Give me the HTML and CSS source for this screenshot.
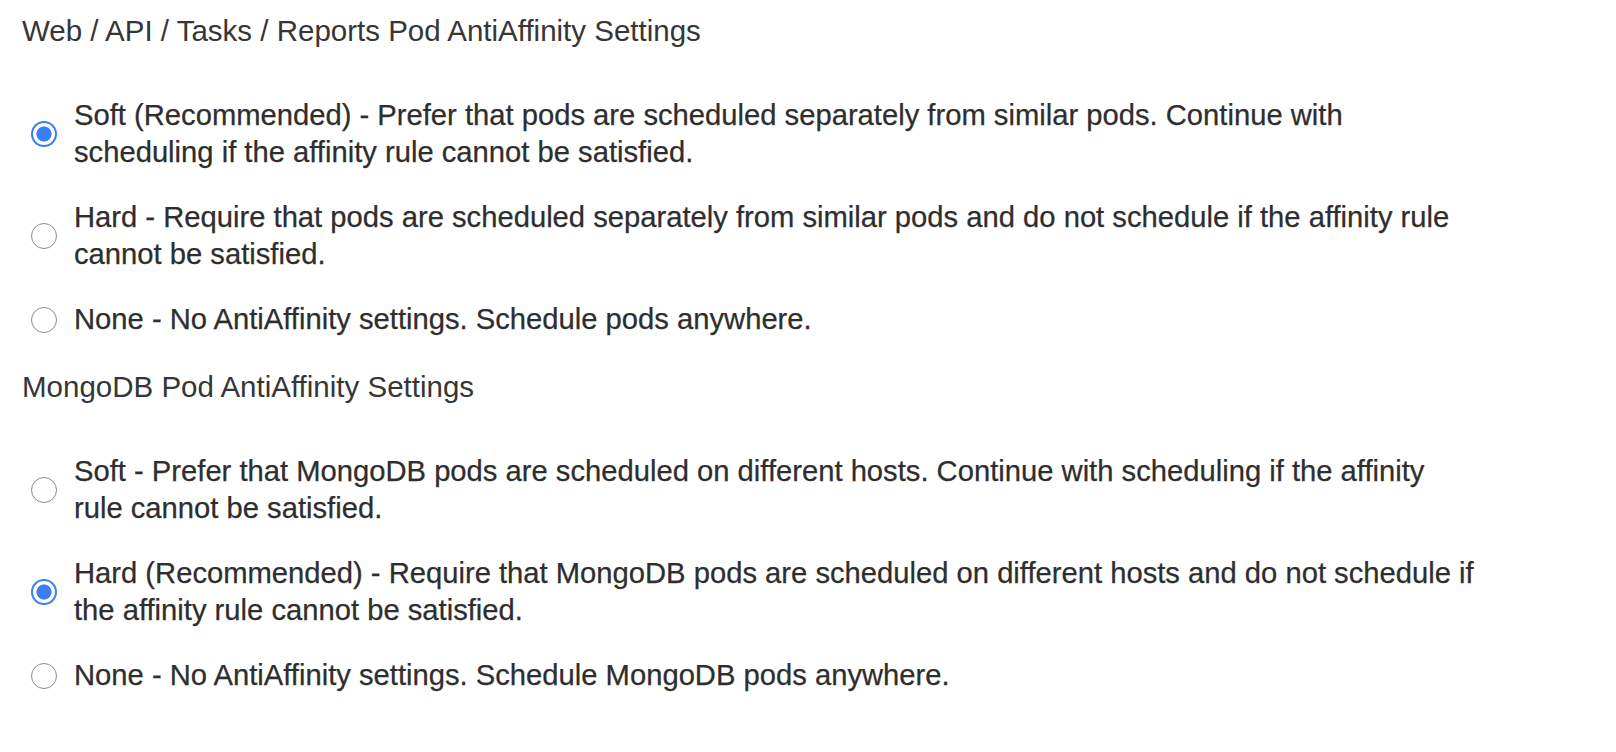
FILE: index.html
```html
<!DOCTYPE html>
<html>
<head>
<meta charset="utf-8">
<link rel="stylesheet" href="styles.css">
</head>
<body>
<div class="page">
  <section class="group">
    <div class="group-title">Web / API / Tasks / Reports Pod AntiAffinity Settings</div>
    <div class="options">
      <label class="option"><input type="radio" name="web" checked><span class="text">Soft (Recommended) - Prefer that pods are scheduled separately from similar pods. Continue with scheduling if the affinity rule cannot be satisfied.</span></label>
      <label class="option"><input type="radio" name="web"><span class="text">Hard - Require that pods are scheduled separately from similar pods and do not schedule if the affinity rule cannot be satisfied.</span></label>
      <label class="option"><input type="radio" name="web"><span class="text">None - No AntiAffinity settings. Schedule pods anywhere.</span></label>
    </div>
  </section>
  <section class="group">
    <div class="group-title">MongoDB Pod AntiAffinity Settings</div>
    <div class="options">
      <label class="option"><input type="radio" name="mongo"><span class="text">Soft - Prefer that MongoDB pods are scheduled on different hosts. Continue with scheduling if the affinity rule cannot be satisfied.</span></label>
      <label class="option"><input type="radio" name="mongo" checked><span class="text">Hard (Recommended) - Require that MongoDB pods are scheduled on different hosts and do not schedule if the affinity rule cannot be satisfied.</span></label>
      <label class="option"><input type="radio" name="mongo"><span class="text">None - No AntiAffinity settings. Schedule MongoDB pods anywhere.</span></label>
    </div>
  </section>
</div>
</body>
</html>
```

FILE: styles.css
```css
html, body {
  margin: 0;
  padding: 0;
  background: #ffffff;
}

body {
  font-family: "Liberation Sans", Arial, Helvetica, sans-serif;
  color: #333333;
}

.page {
  padding: 12px 0 0 22px;
  display: flex;
  flex-direction: column;
  gap: 30px;
}

.group {
  display: flex;
  flex-direction: column;
  gap: 48px;
}

.group-title {
  font-size: 29.5px;
  line-height: 37px;
  color: #363636;
}

.options {
  display: flex;
  flex-direction: column;
  gap: 28px;
}

.option {
  display: flex;
  align-items: center;
  gap: 17px;
  width: 1449px;
  padding-left: 9px;
  font-size: 29.2px;
  line-height: 37px;
  color: #2e2e2e;
  -webkit-text-stroke: 0.25px #2e2e2e;
  cursor: pointer;
}

.option input {
  appearance: none;
  -webkit-appearance: none;
  flex: 0 0 auto;
  width: 26px;
  height: 26px;
  margin: 0;
  border: 1.7px solid #8a8a8a;
  border-radius: 50%;
  background: #ffffff;
  box-sizing: border-box;
}

.option input:checked {
  border: 2.6px solid #3a7ff6;
  background: radial-gradient(circle, #3a7ff6 0, #3a7ff6 7.2px, #ffffff 7.9px);
}

.text {
  flex: 1 1 auto;
  min-width: 0;
}
```
